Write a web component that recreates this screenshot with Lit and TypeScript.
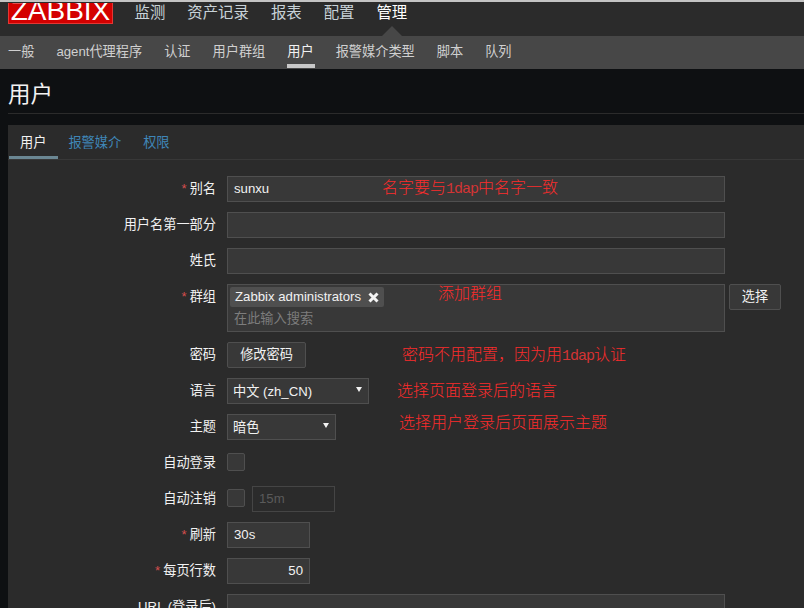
import { LitElement, html, css, nothing } from "lit";
import { customElement } from "lit/decorators.js";

const MAIN_NAV = ["监测", "资产记录", "报表", "配置", "管理"];
const SUB_NAV = ["一般", "agent代理程序", "认证", "用户群组", "用户", "报警媒介类型", "脚本", "队列"];

@customElement("app-root")
export class AppRoot extends LitElement {
  static styles = css`
    :host {
      display: block;
      position: relative;
      width: 804px;
      height: 608px;
      overflow: hidden;
      background: #0e1012;
      font-family: "Liberation Sans", "Noto Sans CJK SC", sans-serif;
      font-size: 13.2px;
      color: #f2f2f2;
    }
    .topline {
      height: 3px;
      box-sizing: border-box;
      background: #2b2b2b;
      border-top: 2px solid #c4c4c4;
    }
    .header {
      display: flex;
      height: 33px;
      background: #2b2b2b;
      padding-left: 8px;
    }
    .logo {
      width: 105px;
      height: 21px;
      box-sizing: border-box;
      overflow: hidden;
      background: #d40000;
      border: solid #e33734;
      border-width: 0 1px 1px;
      color: #fff;
      font-size: 28px;
      line-height: 15px;
      text-align: center;
    }
    .main-nav {
      display: flex;
      gap: 22px;
      margin-left: 21.5px;
      font-size: 15.4px;
      line-height: 20px;
      color: #c8d2d8;
    }
    .main-nav .active {
      color: #fff;
    }
    .sub-nav {
      position: relative;
      display: flex;
      gap: 22px;
      height: 33px;
      padding-left: 8px;
      background: #474747;
      color: #d0d0d0;
      line-height: 32px;
    }
    .sub-nav span {
      position: relative;
    }
    .sub-nav .active {
      color: #f2f2f2;
    }
    .sub-nav .active::after {
      content: "";
      position: absolute;
      left: 0;
      right: -1px;
      bottom: 1px;
      height: 4px;
      background: #c8c8c8;
    }
    .sub-nav::before {
      content: "";
      position: absolute;
      left: 382px;
      top: -10px;
      border: solid transparent;
      border-width: 0 10px 10px;
      border-bottom-color: #474747;
    }
    .title {
      margin: 0 0 0 8px;
      height: 45px;
      box-sizing: border-box;
      border-bottom: 1px solid #2b2b2b;
      font-size: 22.5px;
      font-weight: 400;
      line-height: 52px;
      color: #f2f2f2;
    }
    .card {
      margin: 11px 0 0 8px;
      background: #2b2b2b;
      height: 483px;
    }
    .tabs {
      display: flex;
      height: 35px;
      box-sizing: border-box;
      border-bottom: 1px solid #383838;
      padding-left: 1px;
      line-height: 35px;
      color: #3f86b8;
    }
    .tabs span {
      padding: 0 11px;
    }
    .tabs .active {
      height: 34px;
      box-sizing: border-box;
      border-bottom: 3px solid #6b8793;
      color: #f2f2f2;
      padding-right: 12px;
      margin-right: -1px;
    }
    .form {
      display: grid;
      grid-template-columns: 208px 1fr;
      column-gap: 11px;
      row-gap: 10px;
      padding-top: 16px;
    }
    .label {
      text-align: right;
      line-height: 26px;
      color: #f2f2f2;
    }
    .req {
      color: #d64e4e;
      margin-right: 3px;
    }
    .field {
      display: flex;
      gap: 4px;
      min-height: 26px;
    }
    .input,
    .btn,
    .select {
      display: block;
      height: 26px;
      box-sizing: border-box;
      background: #383838;
      border: 1px solid #4f4f4f;
      line-height: 24px;
      padding: 0 6px;
      color: #f2f2f2;
    }
    .wide {
      width: 498px;
    }
    .short {
      width: 83px;
    }
    .num {
      text-align: right;
    }
    .btn {
      border-radius: 2px;
      text-align: center;
      padding: 0;
    }
    .pick {
      width: 52px;
    }
    .change {
      width: 79px;
    }
    .select {
      position: relative;
      padding: 0 5px;
      line-height: 26px;
    }
    .select::after {
      content: "";
      position: absolute;
      right: 6px;
      top: 8px;
      border: solid transparent;
      border-width: 5px 3.5px 0;
      border-top-color: #f2f2f2;
    }
    .lang {
      width: 142px;
    }
    .theme {
      width: 109px;
    }
    .groups {
      width: 498px;
      height: 48px;
      box-sizing: border-box;
      background: #383838;
      border: 1px solid #4f4f4f;
      padding: 2px;
    }
    .chip {
      display: flex;
      align-items: center;
      justify-content: space-between;
      width: 154px;
      height: 20px;
      box-sizing: border-box;
      padding: 0 4px 1px 5px;
      background: #4f4f4f;
      border-radius: 2px;
    }
    .chip svg {
      display: block;
      margin: 1px 1px 0 0;
    }
    .hint {
      margin: 2px 0 0 4px;
      line-height: 20px;
      color: #7d7d7d;
    }
    .check {
      width: 18px;
      height: 18px;
      box-sizing: border-box;
      margin-top: 3px;
      background: #383838;
      border: 1px solid #4f4f4f;
      border-radius: 2px;
    }
    .logout {
      gap: 6px;
    }
    .off {
      background: #2b2b2b;
      border-color: #454545;
      color: #5a5a5a;
      margin-left: 1px;
    }
    .note {
      position: absolute;
      white-space: nowrap;
      font-family: "Noto Sans CJK SC", sans-serif;
      font-size: 16px;
      font-weight: 300;
      line-height: 18px;
      color: #fb2c2c;
    }
    .note b {
      font-family: "Liberation Mono", monospace;
      font-size: 15px;
      letter-spacing: -1px;
      font-weight: 400;
      color: #d33434;
    }
  `;

  private row(label: string, required: boolean, field: unknown) {
    return html`
      <div class="label">${required ? html`<span class="req">*</span>` : nothing}${label}</div>
      <div class="field">${field}</div>
    `;
  }

  render() {
    return html`
      <div class="topline"></div>
      <div class="header">
        <div class="logo">ZABBIX</div>
        <div class="main-nav">
          ${MAIN_NAV.map((n) => html`<span class=${n === "管理" ? "active" : ""}>${n}</span>`)}
        </div>
      </div>
      <div class="sub-nav">
        ${SUB_NAV.map((n) => html`<span class=${n === "用户" ? "active" : ""}>${n}</span>`)}
      </div>
      <h1 class="title">用户</h1>
      <div class="card">
        <div class="tabs">
          <span class="active">用户</span>
          <span>报警媒介</span>
          <span>权限</span>
        </div>
        <div class="form">
          ${this.row("别名", true, html`<div class="input wide">sunxu</div>`)}
          ${this.row("用户名第一部分", false, html`<div class="input wide"></div>`)}
          ${this.row("姓氏", false, html`<div class="input wide"></div>`)}
          ${this.row(
            "群组",
            true,
            html`<div class="groups">
                <div class="chip">
                  Zabbix administrators
                  <svg width="11" height="11" viewBox="0 0 11 11">
                    <path d="M1.5 1.5l8 8M9.5 1.5l-8 8" stroke="#f5f5f5" stroke-width="3" />
                  </svg>
                </div>
                <div class="hint">在此输入搜索</div>
              </div>
              <div class="btn pick">选择</div>`
          )}
          ${this.row("密码", false, html`<div class="btn change">修改密码</div>`)}
          ${this.row("语言", false, html`<div class="select lang">中文 (zh_CN)</div>`)}
          ${this.row("主题", false, html`<div class="select theme">暗色</div>`)}
          ${this.row("自动登录", false, html`<div class="check"></div>`)}
          ${this.row(
            "自动注销",
            false,
            html`<div class="field logout">
              <div class="check"></div>
              <div class="input short off">15m</div>
            </div>`
          )}
          ${this.row("刷新", true, html`<div class="input short">30s</div>`)}
          ${this.row("每页行数", true, html`<div class="input short num">50</div>`)}
          ${this.row("URL (登录后)", false, html`<div class="input wide"></div>`)}
        </div>
      </div>
      <div class="note" style="left:382px;top:177px">名字要与<b>1dap</b>中名字一致</div>
      <div class="note" style="left:438px;top:283px">添加群组</div>
      <div class="note" style="left:402px;top:344px">密码不用配置，因为用<b>1dap</b>认证</div>
      <div class="note" style="left:397px;top:380px">选择页面登录后的语言</div>
      <div class="note" style="left:399px;top:412px">选择用户登录后页面展示主题</div>
    `;
  }
}
